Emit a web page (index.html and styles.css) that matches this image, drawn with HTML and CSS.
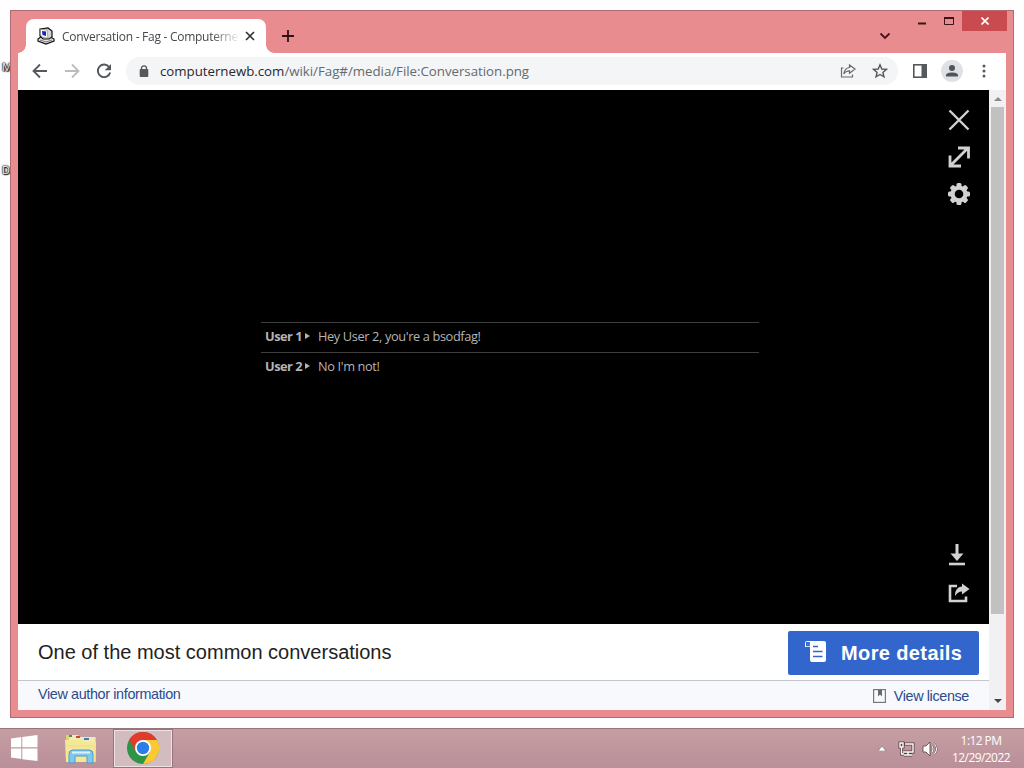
FILE: index.html
```
<!DOCTYPE html>
<html lang="en">
<head>
    <meta charset="utf-8">
    <meta name="viewport" content="width=device-width, initial-scale=1">
    <link rel="stylesheet" href="styles.css">
    <title>Conversation - Fag - Computernewb</title>
</head>
<body>
<div class="desktop">
    <span class="desk-label label-m">M</span>
    <span class="desk-label label-d">D</span>

    <div class="window">
        <div class="tabstrip">
            <div class="tab">
                <svg class="favicon" width="18" height="18" viewBox="0 0 18 18">
                    <path d="M1 12L5 9H12L17 12V14L9 17L1 14Z" fill="#e4e4e4" stroke="#111" stroke-width="1.2"/>
                    <path d="M3 2L11 1L15 4V10L12 12H6L3 9Z" fill="#d5d5d8" stroke="#111" stroke-width="1.2"/>
                    <path d="M3.500 2.500L10 3L11 11L6 10.500L3.500 8Z" fill="#fff" stroke="#777" stroke-width=".6"/>
                    <path d="M5 4L9 4.500V9L5.500 8Z" fill="#1526b8"/>
                    <path d="M3 13L9 15L15 13" fill="none" stroke="#777"/>
                </svg>
                <span class="tab-title">Conversation - Fag - Computerne</span>
                <svg class="tab-close" width="10" height="10" viewBox="0 0 10 10"><path d="M1 1L9 9M9 1L1 9" stroke="#333" stroke-width="1.7"/></svg>
            </div>
            <svg class="new-tab" width="12" height="12" viewBox="0 0 12 12"><path d="M6 0V12M0 6H12" stroke="#2f1115" stroke-width="1.8"/></svg>
            <svg class="tab-search" width="12" height="8" viewBox="0 0 12 8"><path d="M1.5 1.5L6 6L10.500 1.500" fill="none" stroke="#4a1218" stroke-width="1.8"/></svg>
            <div class="caption">
                <svg class="minimize" width="8" height="3"><rect width="8" height="2" y=".5" fill="#3c1418"/></svg>
                <svg class="maximize" width="10" height="8"><path d="M.5 0V7.500H9.500V0" fill="none" stroke="#3c1418"/><rect width="10" height="2" fill="#3c1418"/></svg>
                <div class="close">
                    <svg width="8" height="8" viewBox="0 0 8 8"><path d="M.5 .5L7.500 7.500M7.500 .5L.5 7.500" stroke="#fff" stroke-width="1.6"/></svg>
                </div>
            </div>
        </div>

        <div class="toolbar">
            <svg class="nav" width="16" height="16" viewBox="0 0 16 16"><path d="M15 8H2M8 1.500L1.500 8L8 14.500" fill="none" stroke="#55585c" stroke-width="1.8"/></svg>
            <svg class="nav" width="16" height="16" viewBox="0 0 16 16"><path d="M1 8H14M8 1.500L14.500 8L8 14.500" fill="none" stroke="#babcbe" stroke-width="1.8"/></svg>
            <svg class="nav" width="16" height="16" viewBox="0 0 16 16"><path d="M13.300 4.200A6.300 6.300 0 1 0 14.200 9.500" fill="none" stroke="#55585c" stroke-width="1.900"/><path d="M15 1V7.300H8.700Z" fill="#55585c"/></svg>
            <div class="omnibox">
                <svg class="lock" width="10" height="12" viewBox="0 0 10 12"><path d="M2.500 5V3.300A2.500 2.500 0 0 1 7.500 3.300V5" fill="none" stroke="#55585c" stroke-width="1.300"/><rect x=".7" y="4" width="8.600" height="8" rx="1" fill="#55585c"/></svg>
                <span class="url"><b>computernewb.com</b>/wiki/Fag#/media/File:Conversation.png</span>
                <svg class="share" width="16" height="14" viewBox="0 0 16 14"><path d="M3.500 4H1.500V13H12.500V10.500" fill="none" stroke="#66696d" stroke-width="1.200"/><path d="M9.500 1L15 5L9.500 9.300V6.800C6.800 6.800 5 7.800 3.800 10C4.300 6.300 6.300 3.900 9.500 3.500Z" fill="none" stroke="#66696d" stroke-width="1.200"/></svg>
                <svg class="star" width="16" height="16" viewBox="0 0 16 16"><path d="M8 1.800L9.800 6L14.400 6.400L10.900 9.400L12 13.900L8 11.500L4 13.900L5.100 9.400L1.600 6.400L6.200 6Z" fill="none" stroke="#55585c" stroke-width="1.400"/></svg>
            </div>
            <svg class="panel" width="14" height="14" viewBox="0 0 14 14"><rect x=".8" y=".8" width="12.400" height="12.400" fill="none" stroke="#55585c" stroke-width="1.600"/><rect x="8.500" width="5.500" height="14" fill="#55585c"/></svg>
            <svg class="profile" width="22" height="22" viewBox="0 0 22 22"><circle cx="11" cy="11" r="11" fill="#dfe1e6"/><circle cx="11" cy="8" r="3" fill="#50545b"/><path d="M5 16.500V15C5 11.500 17 11.500 17 15V16.500Z" fill="#50545b"/></svg>
            <svg class="menu" width="4" height="14" viewBox="0 0 4 14"><circle cx="2" cy="2" r="1.500"/><circle cx="2" cy="7" r="1.500"/><circle cx="2" cy="12" r="1.500"/></svg>
        </div>

        <div class="content">
            <div class="page">
                <div class="viewer">
                    <div class="media">
                        <div class="line"><b>User 1</b><i class="arrow"></i><span>Hey User 2, you're a bsodfag!</span></div>
                        <div class="line"><b>User 2</b><i class="arrow"></i><span>No I'm not!</span></div>
                    </div>
                    <div class="actions">
                        <svg width="22" height="22" viewBox="0 0 22 22"><path d="M1.500 1.500L20.500 20.500M20.500 1.500L1.500 20.500" stroke="#d2d2d2" stroke-width="2.400"/></svg>
                        <svg width="22" height="22" viewBox="0 0 22 22"><path d="M3 19L19 3M10 2H20.500V12.500M2 9.500V20H13" fill="none" stroke="#d2d2d2" stroke-width="2.800"/></svg>
                        <svg class="gear" width="22" height="22" viewBox="0 0 22 22"><g fill="#d2d2d2"><rect id="tooth" x="8.500" y="0" width="5" height="22" rx="1.500"/><use href="#tooth" transform="rotate(45 11 11)"/><use href="#tooth" transform="rotate(90 11 11)"/><use href="#tooth" transform="rotate(135 11 11)"/><circle cx="11" cy="11" r="8.600"/></g><circle cx="11" cy="11" r="4.300"/></svg>
                        <svg class="download" width="18" height="22" viewBox="0 0 18 22"><path d="M9 0V12" stroke="#d2d2d2" stroke-width="3"/><path d="M2.500 9.500H15.500L9 17Z" fill="#d2d2d2"/><path d="M1 20H17" stroke="#d2d2d2" stroke-width="2.600"/></svg>
                        <svg class="reuse" width="22" height="20" viewBox="0 0 22 20"><path d="M9 3H2V18H18V13.500" fill="none" stroke="#d2d2d2" stroke-width="2.600"/><path d="M14 0.500L21.500 6L14 11.500V8.500C11 8.500 9 10 7 13C7 7 9.500 4 14 3.500Z" fill="#d2d2d2"/></svg>
                    </div>
                </div>
                <div class="details">
                    <span class="caption-text">One of the most common conversations</span>
                    <div class="more">
                        <svg width="21" height="22" viewBox="0 0 21 22"><path d="M2 0H19Q21 0 21 2V19Q21 21 19 21H7Q5 21 5 19V6H0V2Q0 0 2 0Z" fill="#fff"/><path d="M1.800 1.800H4V4.300H1.800ZM8 5.500H13M8 10.500H17.500M8 15.500H17.500" fill="none" stroke="#36c" stroke-width="1.700"/></svg>
                        <span>More details</span>
                    </div>
                </div>
                <div class="credits">
                    <span class="author">View author information</span>
                    <span class="license">
                        <svg width="13" height="14" viewBox="0 0 13 14"><rect x=".6" y=".6" width="11.800" height="12.800" fill="none" stroke="#77797c" stroke-width="1.200"/><path d="M5 1H9V7.500L7 5.500L5 7.500Z" fill="#66696c"/></svg>
                        <span>View license</span>
                    </span>
                </div>
            </div>
            <div class="scrollbar">
                <svg width="8" height="4"><path d="M0 4L4 0L8 4Z" fill="#8b8b8b"/></svg>
                <div class="thumb"></div>
                <svg class="down" width="8" height="4"><path d="M0 0L4 4L8 0Z" fill="#444"/></svg>
            </div>
        </div>
    </div>

    <div class="taskbar">
        <svg class="start" width="28" height="26" viewBox="0 0 28 26"><path d="M1 3.500L11.300 2V12.300H1ZM12.300 1.900L27.500 0V12.300H12.300ZM1 13.400H11.300V24L1 22.500ZM12.300 13.400H27.500V26L12.300 24.200Z" fill="#fff"/></svg>
        <svg class="explorer" width="34" height="30" viewBox="0 0 34 30">
            <path d="M2 1H12L14 3H32V28H2Z" fill="#e5cf74"/>
            <path d="M5 1H14L16 3H31V10H5Z" fill="#f2eab4"/>
            <path d="M5 2H8" stroke="#3a9b4f" stroke-width="2"/><path d="M12 3H16" stroke="#c44731" stroke-width="2"/><path d="M20 5H25" stroke="#3b7dae" stroke-width="2"/>
            <path d="M1 6H17L19 8H32L31 28H2Z" fill="#f4e795"/>
            <path d="M3 12H30M3 18H30" stroke="#eadb85"/>
            <path d="M5 29V20Q5 16 9 16H25Q29 16 29 20V29H23V22H11V29Z" fill="#83c7ed" stroke="#4a9dcc"/>
            <path d="M8 18.500H26" stroke="#d7f2ff" stroke-width="2"/>
        </svg>
        <div class="task">
            <svg width="32" height="32" viewBox="0 0 32 32">
                <circle cx="16" cy="16" r="16" fill="#2e9447"/>
                <path d="M16 8H29.860A16 16 0 0 1 16 32L22.930 20Z" fill="#fcc934"/>
                <path d="M2.140 8A16 16 0 0 1 29.860 8H16L9.070 20Z" fill="#e03b2f"/>
                <circle cx="16" cy="16" r="8" fill="#fff"/><circle cx="16" cy="16" r="6.200" fill="#2b7de9"/>
            </svg>
        </div>
        <div class="tray">
            <svg width="8" height="5"><path d="M0 5L4 0L8 5Z" fill="#fff" stroke="#74545a" stroke-width=".5"/></svg>
            <svg class="network" width="18" height="16" viewBox="0 0 18 16"><g fill="none" stroke="#563d42" stroke-width="3"><path d="M6 3H15V11H5M10 11V14M6 14H14M2 2H5V6H2ZM3.500 6V13H6"/></g><g fill="none" stroke="#fff" stroke-width="1.400"><path d="M7 3H15V11H5M10 11V14M6 14H14M2 2H5V6H2ZM3.500 6V13H6"/></g></svg>
            <svg class="volume" width="17" height="16" viewBox="0 0 17 16"><path d="M1 5H4L8 1V15L4 11H1Z" fill="#fff" stroke="#563d42" stroke-width=".8"/><g fill="none" stroke="#563d42" stroke-width="2"><path d="M10 5Q12 8 10 11M12.500 3Q16.500 8 12.500 13"/></g><g fill="none" stroke="#fff" stroke-width="1.100"><path d="M10 5Q12 8 10 11M12.500 3Q16.500 8 12.500 13"/></g></svg>
            <div class="clock"><div class="time">1:12 PM</div><div class="date">12/29/2022</div></div>
        </div>
    </div>
</div>
</body>
</html>
```
FILE: styles.css
```
*{
  box-sizing: border-box;
}
body{
  margin: 0;
  overflow: hidden;
  font-family: "Open Sans", "Noto Sans", sans-serif;
}
svg{
  display: block;
  flex: none;
}
span, b{
  white-space: nowrap;
}
.desktop{
  position: relative;
  width: 1024px;
  height: 768px;
  padding-top: 10px;
  background: #fdfefd;
}

/* labels of the icons behind the window */
.desk-label{
  position: absolute;
  left: 2px;
  font-size: 11px;
  line-height: 14px;
  color: #fff;
  text-shadow: 0 0 2px #000, 1px 1px 1px #000, 0 0 1px #000, 0 0 2px #000;
}
.label-m{
  top: 60px;
}
.label-d{
  top: 163px;
}

.window{
  position: relative;
  width: 1004px;
  height: 708px;
  margin: 0 10px 10px;
  padding: 0 7px 7px;
  border: 1px solid #b26b75;
  background: #e88c8f;
}
.tabstrip{
  display: flex;
  height: 42px;
}
.tab{
  position: relative;
  display: flex;
  align-items: center;
  width: 240px;
  height: 34px;
  margin: 8px 0 0 8px;
  padding: 0 11px;
  border-radius: 8px 8px 0 0;
  background: #fff;
}
/* curved feet of the tab */
.tab::before,
.tab::after{
  content: "";
  position: absolute;
  bottom: 0;
  width: 8px;
  height: 8px;
}
.tab::before{
  left: -8px;
  background: radial-gradient(circle at 0 0, transparent 7.5px, #fff 8px);
}
.tab::after{
  right: -8px;
  background: radial-gradient(circle at 100% 0, transparent 7.5px, #fff 8px);
}
.tab-title{
  width: 176px;
  margin: 0 7px;
  font-size: 12px;
  letter-spacing: -0.27px;
  color: #45484c;
  -webkit-mask-image: linear-gradient(90deg, #000 150px, transparent 178px);
  mask-image: linear-gradient(90deg, #000 150px, transparent 178px);
}
.new-tab{
  margin: 19px 0 0 16px;
}
.tab-search{
  margin: 21px 0 0 auto;
}
.caption{
  display: flex;
  margin-left: 27px;
}
.minimize{
  margin: 11px 18px 0 0;
}
.maximize{
  margin: 6px 8px 0 0;
}
.close{
  display: flex;
  align-items: center;
  justify-content: center;
  width: 45px;
  height: 20px;
  margin-right: -1px;
  background: #c94b50;
}

.toolbar{
  display: flex;
  align-items: center;
  height: 37px;
  padding: 0 20px 2px 14px;
  background: #fff;
}
.nav{
  margin-right: 16px;
}
.omnibox{
  display: flex;
  align-items: center;
  width: 772px;
  height: 28px;
  margin-left: -2px;
  padding: 0 10px 0 13px;
  border-radius: 14px;
  background: #f4f5f7;
}
.url{
  margin-left: 11px;
  font-size: 13.3px;
  letter-spacing: -0.03px;
  color: #65696e;
}
.url b{
  font-weight: 400;
  color: #27292c;
}
.share{
  margin-left: auto;
}
.star{
  margin-left: 16px;
}
.panel{
  margin-left: 15px;
}
.profile{
  margin-left: 14px;
}
.menu{
  margin-left: auto;
  fill: #55585c;
}

.content{
  display: flex;
  height: 620px;
}
.page{
  width: 971px;
}
.viewer{
  display: flex;
  height: 534px;
  background: #000;
}
.media{
  width: 498px;
  margin: 232px 0 0 243px;
  font-size: 12.8px;
  color: #b4b4b4;
}
.line{
  display: flex;
  align-items: center;
  height: 30px;
  padding: 0 4px 3px;
  border-top: 1px solid #3e3e3e;
}
.line b{
  width: 37px;
  letter-spacing: -0.5px;
}
.line span{
  margin-left: 8px;
  letter-spacing: -0.38px;
}
.arrow{
  margin-left: 3px;
  border: 3px solid transparent;
  border-left: 5px solid #b4b4b4;
  border-right: 0;
}
.actions{
  display: flex;
  flex-direction: column;
  width: 22px;
  height: 494px;
  margin: 19px 19px 0 auto;
  gap: 15px;
}
.actions .download{
  margin: auto 0 0;
}
.actions .reuse{
  margin-top: 2px;
}
.details{
  display: flex;
  align-items: center;
  justify-content: space-between;
  height: 56px;
  padding: 1px 10px 0 20px;
  background: #fff;
  font-family: "Liberation Sans", sans-serif;
}
.caption-text{
  font-size: 20px;
  color: #222;
}
.more{
  display: flex;
  align-items: center;
  width: 191px;
  height: 44px;
  padding-left: 17px;
  border-radius: 2px;
  background: #36c;
  font-size: 20px;
  font-weight: bold;
  color: #fff;
}
.more svg{
  margin-top: -1px;
}
.more span{
  margin-left: 15px;
  padding-top: 1px;
  letter-spacing: 0.38px;
}
.credits{
  display: flex;
  align-items: center;
  justify-content: space-between;
  height: 30px;
  padding: 0 20px;
  border-top: 1px solid #c4c8cc;
  background: #f8f9fd;
  font: 14.4px "Liberation Sans", sans-serif;
  letter-spacing: -0.37px;
  color: #2a4b8d;
}
.author{
  padding-bottom: 3px;
}
.license{
  display: flex;
  align-items: center;
  gap: 8px;
}
.scrollbar{
  display: flex;
  flex-direction: column;
  align-items: center;
  width: 17px;
  padding: 7px 0 7px;
  background: #f1f1f3;
}
.thumb{
  width: 13px;
  height: 507px;
  margin-top: 6px;
  background: #c1c1c1;
}
.down{
  margin-top: auto;
}

.taskbar{
  display: flex;
  align-items: center;
  height: 40px;
  padding-left: 10px;
  border-top: 1px solid #98747c;
  background: linear-gradient(#c59ea2, #b98f99);
}
.start{
  margin-top: -2px;
}
.explorer{
  margin: 1px 0 0 26px;
}
.task{
  display: flex;
  align-items: center;
  justify-content: center;
  width: 60px;
  height: 39px;
  margin-left: 15px;
  padding-bottom: 2px;
  border: 1px solid #96747a;
  outline: 1px solid #eee3e3;
  outline-offset: -2px;
  background: #d3bcbf;
}
.tray{
  display: flex;
  align-items: center;
  margin: 0 14px 0 auto;
  color: #fff;
}
.network{
  margin-left: 12px;
}
.volume{
  margin-left: 6px;
}
.clock{
  width: 58px;
  margin-left: 13px;
  font-size: 12px;
  line-height: 17px;
  text-align: center;
  letter-spacing: -0.58px;
}
```
